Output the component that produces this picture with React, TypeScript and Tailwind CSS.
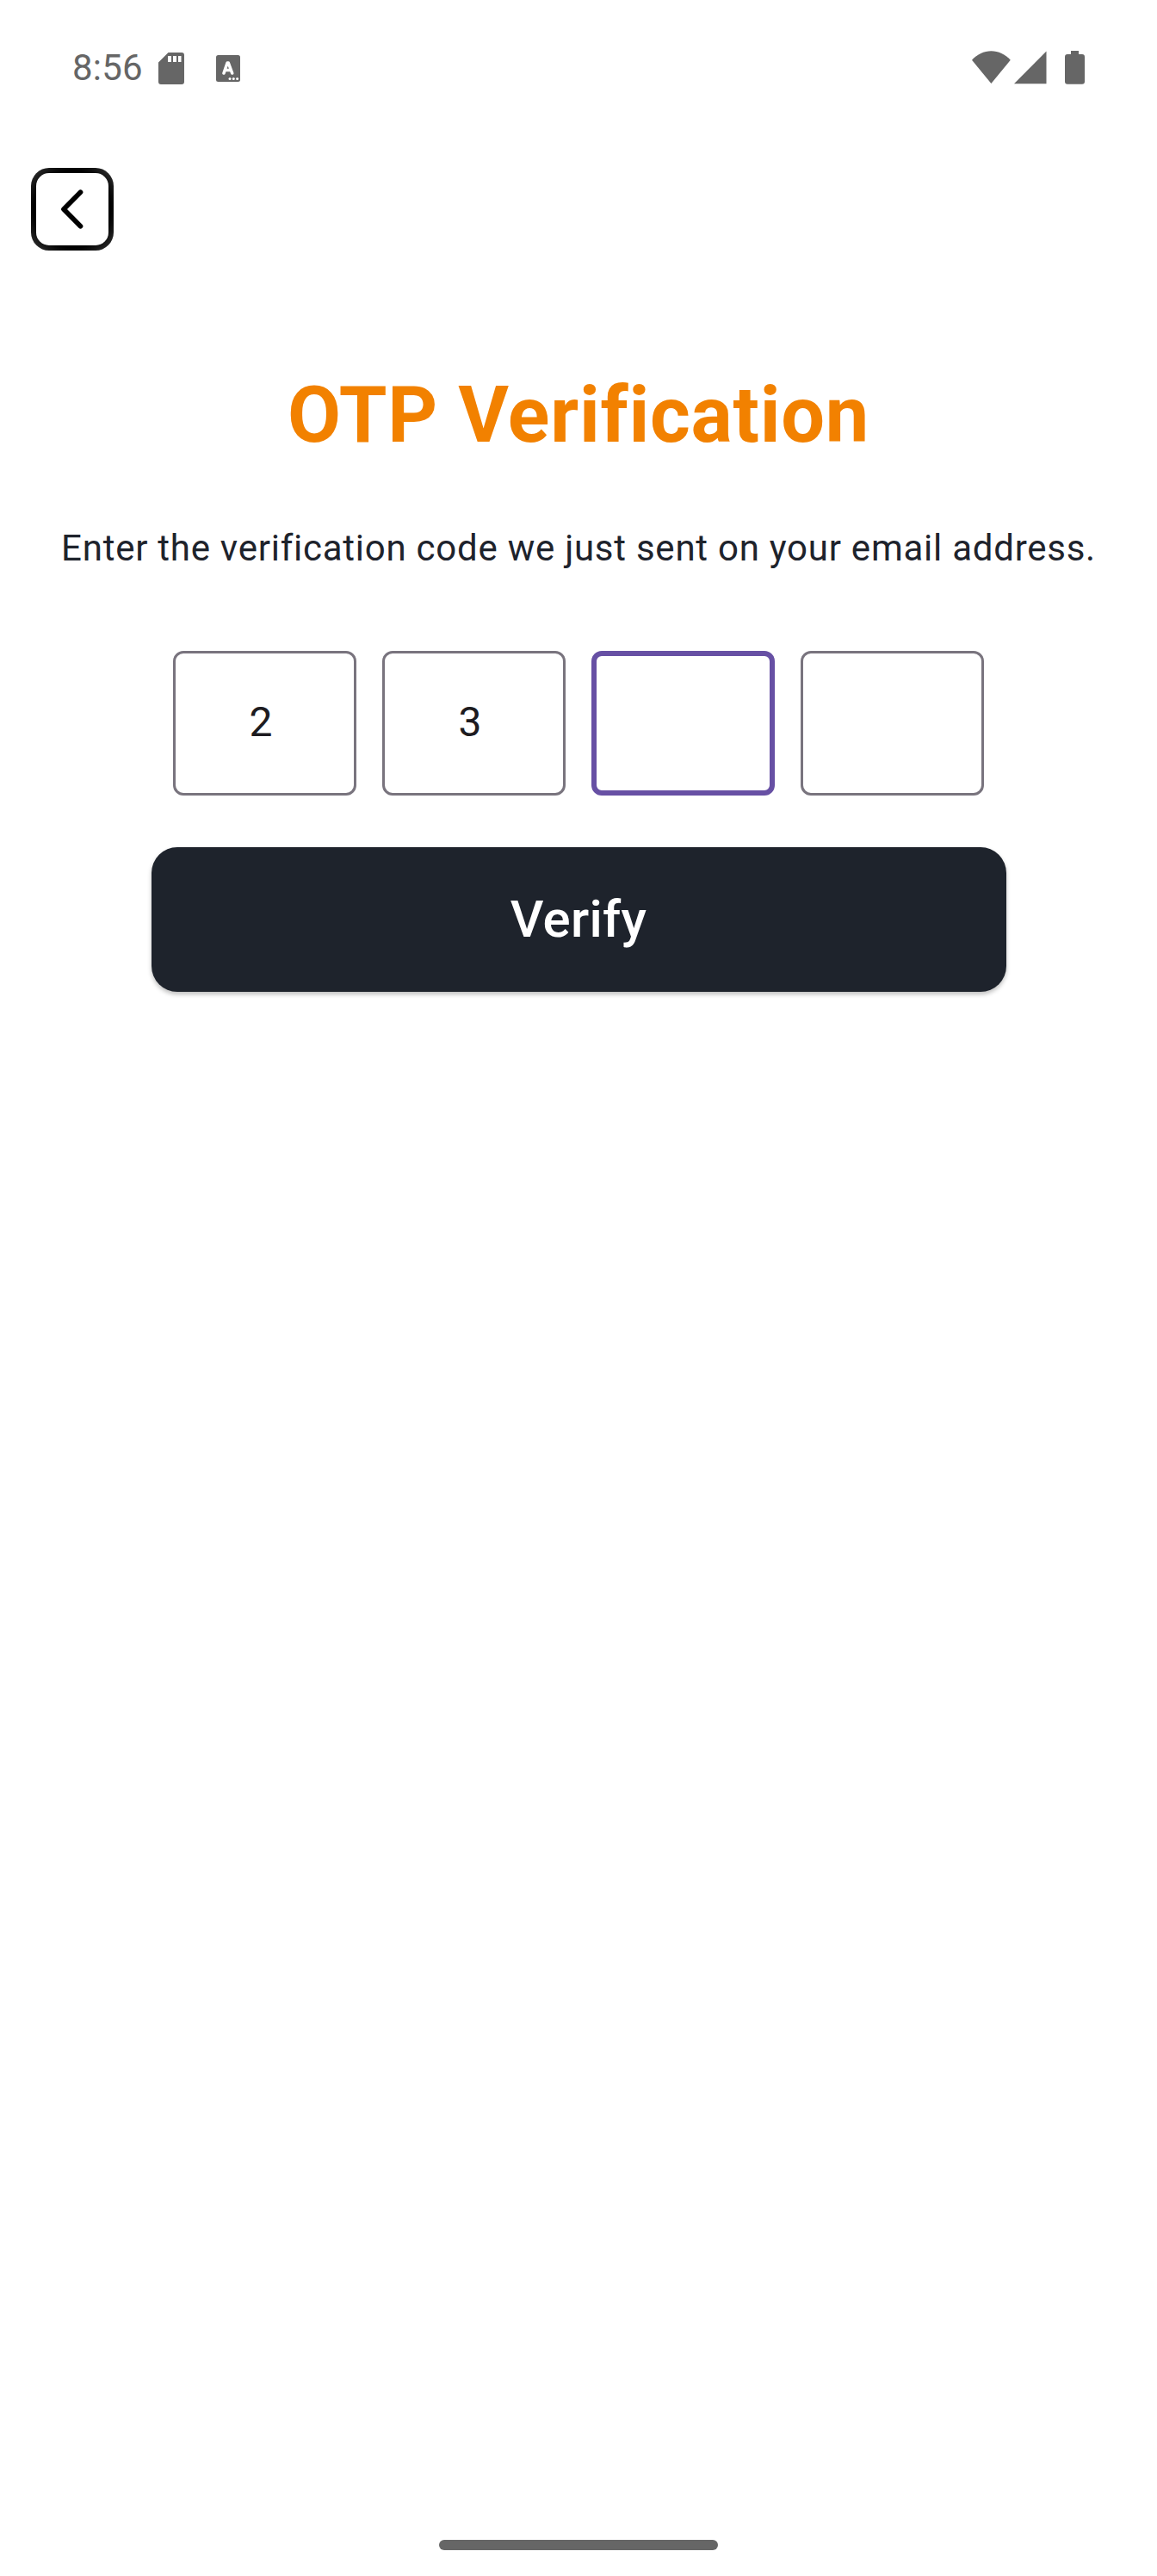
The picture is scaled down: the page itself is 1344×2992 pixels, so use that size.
import React from "react";

function StatusBar() {
  return (
    <header className="flex h-[160px] w-full items-start justify-between pr-[84px] pl-[84px] text-[#666666]">
      <div className="flex items-start">
        <span className="mt-[54px] w-[100px] text-[42px] leading-[50px] tracking-[0.2px]">8:56</span>
        <svg className="mt-[61px] h-[37px] w-[30px]" viewBox="0 0 30 37" fill="currentColor">
          <path
            fillRule="evenodd"
            d="M11.500 0H27a3 3 0 0 1 3 3v31a3 3 0 0 1-3 3H3a3 3 0 0 1-3-3V11.500zM11 4v7h4V4zm6 0v7h4V4zm6 0v7h3.500V4z"
          />
        </svg>
        <svg className="mt-[64px] ml-[37px] h-[31px] w-[28px]" viewBox="0 0 28 31">
          <rect width="28" height="31" rx="2.500" fill="currentColor" />
          <path
            d="M9 21 13.100 9h1.200L18.700 21M10.500 17.500h7"
            fill="none"
            stroke="white"
            strokeWidth="3.600"
            strokeLinecap="round"
            strokeLinejoin="round"
          />
          <g fill="white">
            <circle cx="16" cy="27.500" r="1.500" />
            <circle cx="20.300" cy="27.500" r="1.500" />
            <circle cx="24.600" cy="27.500" r="1.500" />
          </g>
        </svg>
      </div>
      <div className="flex items-start">
        <svg className="mt-[59px] h-[38px] w-[45px]" viewBox="0 0 45 38" fill="currentColor">
          <path d="M0 10.700C6.300 4 14 .3 22.400.3S38.500 4 44.800 10.700L22.400 38z" />
        </svg>
        <svg className="mt-[59px] ml-[4px] h-[39px] w-[38px]" viewBox="0 0 38 39" fill="currentColor">
          <path d="M37.500 .5V38.300H0z" />
        </svg>
        <svg className="mt-[59px] ml-[21px] h-[39px] w-[23px]" viewBox="0 0 23 39" fill="currentColor">
          <path d="M7 0h9v4h4a3 3 0 0 1 3 3v28.700a3 3 0 0 1-3 3H3a3 3 0 0 1-3-3V7a3 3 0 0 1 3-3h4z" />
        </svg>
      </div>
    </header>
  );
}

function CodeBox({ value, focused = false }: { value?: string; focused?: boolean }) {
  return (
    <div
      className={
        focused
          ? "h-[168px] w-[213px] rounded-[12px] border-[6px] border-[#6750a4]"
          : "flex h-[168px] w-[213px] items-center justify-center rounded-[12px] border-[3px] border-[#79747e] pr-[9px] pb-[2px] text-[48px] leading-[72px] text-[#1d1b20]"
      }
    >
      {value}
    </div>
  );
}

export default function App() {
  return (
    <div className="flex h-[2992px] w-[1344px] flex-col items-center overflow-hidden bg-white font-['Roboto',sans-serif]">
      <StatusBar />
      <button
        aria-label="Back"
        className="mt-[35px] ml-[36px] size-[96px] self-start rounded-[21px] bg-[radial-gradient(circle,#000_66%,#2c2c2c_90%)] p-[6px]"
      >
        <svg className="size-[84px] rounded-[15px] bg-white" viewBox="0 0 84 84" fill="none">
          <path
            d="M51.500 22.300 32 42 51.500 61.700"
            stroke="black"
            strokeWidth="5.700"
            strokeLinecap="round"
            strokeLinejoin="round"
          />
        </svg>
      </button>
      <h1 className="mt-[132px] text-[90px] leading-[120px] font-bold tracking-[0.750px] whitespace-nowrap text-[#f28100]">
        OTP Verification
      </h1>
      <p className="mt-[64px] text-[42px] leading-[60px] tracking-[0.750px] whitespace-nowrap text-[#1e232c]">
        Enter the verification code we just sent on your email address.
      </p>
      <div className="mt-[89px] flex gap-[30px]">
        <CodeBox value="2" />
        <CodeBox value="3" />
        <CodeBox focused />
        <CodeBox />
      </div>
      <button className="mt-[60px] flex h-[168px] w-[993px] items-center justify-center rounded-[30px] bg-[#1e232c] text-[60px] leading-[72px] font-medium tracking-[0.300px] text-white shadow-[0_3px_5px_rgba(0,0,0,0.250)]">
        Verify
      </button>
      <div className="mt-auto mb-[30px] h-[12px] w-[324px] rounded-full bg-[#666666]" />
    </div>
  );
}
